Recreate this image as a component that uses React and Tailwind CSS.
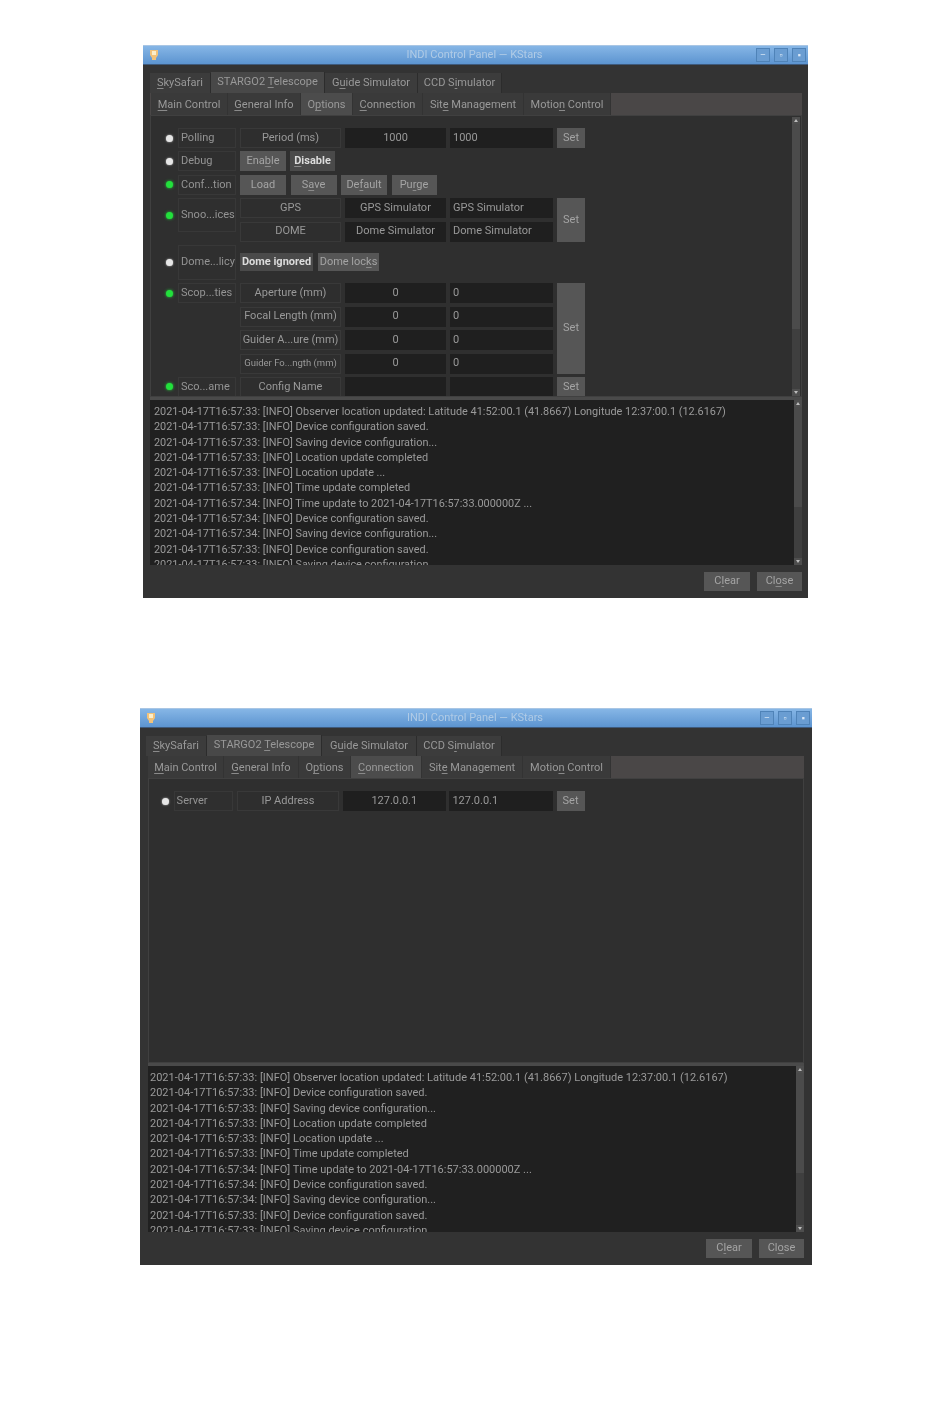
const LOG_LINES = [
  '2021-04-17T16:57:33: [INFO] Observer location updated: Latitude 41:52:00.1 (41.8667) Longitude 12:37:00.1 (12.6167)',
  '2021-04-17T16:57:33: [INFO] Device configuration saved.',
  '2021-04-17T16:57:33: [INFO] Saving device configuration...',
  '2021-04-17T16:57:33: [INFO] Location update completed',
  '2021-04-17T16:57:33: [INFO] Location update ...',
  '2021-04-17T16:57:33: [INFO] Time update completed',
  '2021-04-17T16:57:34: [INFO] Time update to 2021-04-17T16:57:33.000000Z ...',
  '2021-04-17T16:57:34: [INFO] Device configuration saved.',
  '2021-04-17T16:57:34: [INFO] Saving device configuration...',
  '2021-04-17T16:57:33: [INFO] Device configuration saved.',
  '2021-04-17T16:57:33: [INFO] Saving device configuration...',
];

const OUTER_TABS = [
  { pre: '', key: 'S', post: 'kySafari' },
  { pre: 'STARGO2 ', key: 'T', post: 'elescope', active: true },
  { pre: 'G', key: 'u', post: 'ide Simulator' },
  { pre: 'CCD S', key: 'i', post: 'mulator' },
];

const SUB_TABS = [
  { id: 'main', pre: '', key: 'M', post: 'ain Control' },
  { id: 'general', pre: '', key: 'G', post: 'eneral Info' },
  { id: 'options', pre: 'O', key: 'p', post: 'tions' },
  { id: 'connection', pre: '', key: 'C', post: 'onnection' },
  { id: 'site', pre: 'Sit', key: 'e', post: ' Management' },
  { id: 'motion', pre: 'Motio', key: 'n', post: ' Control' },
];

function Mnemonic({ pre, k, post }) {
  return (
    <span className="whitespace-nowrap">
      {pre}
      <u className="underline-offset-2 decoration-[#8a8a8a]">{k}</u>
      {post}
    </span>
  );
}

function Light({ on, className = '' }) {
  return (
    <div className={`flex h-5 items-center justify-center ${className}`}>
      <div
        className={`h-[7px] w-[7px] rounded-full ${
          on ? 'bg-[#22e03c] shadow-[0_0_3px_#22d63a]' : 'bg-[#e6e6e6] shadow-[0_0_2px_#cccccc]'
        }`}
      />
    </div>
  );
}

function Label({ children, className = 'h-5' }) {
  return (
    <div className={`flex items-center border border-[#383838] pl-[2px] text-[11px] text-[#949494] whitespace-nowrap ${className}`}>
      {children}
    </div>
  );
}

function Name({ children, small }) {
  return (
    <div className={`flex h-5 items-center justify-center border border-[#393939] bg-[#2e2e2e] text-[#999999] whitespace-nowrap ${small ? 'text-[9.5px]' : 'text-[11px]'}`}>
      {children}
    </div>
  );
}

function Field({ children, center }) {
  return (
    <div className={`flex h-5 items-center bg-[#1f1f1f] text-[11px] text-[#999999] whitespace-nowrap ${center ? 'justify-center' : 'pl-[3px]'}`}>
      {children}
    </div>
  );
}

function Btn({ children, className = 'h-5', bold }) {
  return (
    <div
      className={`flex items-center justify-center text-[11px] whitespace-nowrap ${
        bold ? 'bg-[#4a4a4a] font-bold text-[#dcdcdc]' : 'bg-[#565656] text-[#a4a4a4]'
      } ${className}`}
    >
      {children}
    </div>
  );
}

function ScrollBar({ thumbClass }) {
  return (
    <div className="flex w-[8px] flex-col bg-[#3f3f3f]">
      <div className="flex h-[7px] items-center justify-center bg-[#4e4e4e]">
        <div className="h-0 w-0 border-x-[2px] border-b-[3px] border-x-transparent border-b-[#bdbdbd]" />
      </div>
      <div className={`bg-[#4b4b4b] ${thumbClass}`} />
      <div className="flex-1" />
      <div className="flex h-[7px] items-center justify-center bg-[#4e4e4e]">
        <div className="h-0 w-0 border-x-[2px] border-t-[3px] border-x-transparent border-t-[#bdbdbd]" />
      </div>
    </div>
  );
}

function TitleBar() {
  return (
    <div className="flex h-5 items-center border-t border-[#a9c6e4] border-b border-b-[#3e5a7c] bg-gradient-to-b from-[#86b6e6] to-[#5c94d0] pl-[6px] pr-[2px]">
      <div className="w-[44px]">
        <svg width="10" height="12" viewBox="0 0 10 12">
          <path d="M1 1h8v5l-2 3v2H3V9L1 6z" fill="#f2c27a" />
          <path d="M3 2h4v4H3z" fill="#fbeecb" />
        </svg>
      </div>
      <div className="flex-1 text-center text-[11px] text-[#b0cbe6]">INDI Control Panel — KStars</div>
      <div className="flex w-[50px] gap-[4px]">
        {['–', '▫', '▪'].map((g) => (
          <div
            key={g}
            className="flex h-[14px] w-[14px] items-center justify-center border border-[#4f83b8] bg-[#6a9dd2] text-[9px] leading-none text-[#dce9f6]"
          >
            {g}
          </div>
        ))}
      </div>
    </div>
  );
}

function OuterTabs({ widths, className }) {
  return (
    <div className={`flex h-[21px] ${className}`}>
      {OUTER_TABS.map((t, i) => (
        <div
          key={t.post}
          className={`flex items-center justify-center border-r border-[#2c2c2c] text-[11px] text-[#999999] ${
            t.active ? 'bg-[#484848]' : 'mt-[1px] bg-[#3c3c3c]'
          } ${widths[i]}`}
        >
          <Mnemonic pre={t.pre} k={t.key} post={t.post} />
        </div>
      ))}
    </div>
  );
}

function SubTabs({ widths, active, className }) {
  return (
    <div className={`flex h-[22px] items-stretch bg-[#4a4747] ${className}`}>
      {SUB_TABS.map((t, i) => (
        <div
          key={t.id}
          className={`flex items-center justify-center border-r border-[#333333] pt-[2px] text-[11px] text-[#999999] ${
            t.id === active ? 'bg-[#4c4c4c]' : 'bg-[#3a3a3a]'
          } ${widths[i]}`}
        >
          <Mnemonic pre={t.pre} k={t.key} post={t.post} />
        </div>
      ))}
    </div>
  );
}

function LogPanel({ height, textClass }) {
  return (
    <div className={`flex bg-[#202020] ${height}`}>
      <div className={`flex-1 overflow-hidden pt-[4px] text-[#9a9a9a] ${textClass}`}>
        {LOG_LINES.map((line, i) => (
          <div key={i} className="h-[15.3px] whitespace-nowrap leading-[15.3px]">
            {line}
          </div>
        ))}
      </div>
      <ScrollBar thumbClass="h-[100px]" />
    </div>
  );
}

function Footer({ className }) {
  return (
    <div className={`flex h-[33px] items-center justify-end gap-[7px] bg-[#333333] ${className}`}>
      <Btn className="h-[19px] w-[46px]">
        <Mnemonic pre="C" k="l" post="ear" />
      </Btn>
      <Btn className="h-[19px] w-[45px]">
        <Mnemonic pre="Cl" k="o" post="se" />
      </Btn>
    </div>
  );
}

function OptionsPanel() {
  return (
    <div className="flex h-[282px] border border-[#404040] bg-[#2f2f2f] pr-[1px] pt-[1px]">
      <div className="flex-1 overflow-hidden pl-[14px] pt-[11px]">
        <div className="grid grid-cols-[9px_58px_101px_101px_103px_28px] grid-rows-[20px_20px_20px_20px_20px_35px_20px_20px_20px_20px_20px] gap-x-[4px] gap-y-[3.4px]">
          <Light />
          <Label>Polling</Label>
          <Name>Period (ms)</Name>
          <Field center>1000</Field>
          <Field>1000</Field>
          <Btn>Set</Btn>

          <Light />
          <Label>Debug</Label>
          <div className="col-span-4 flex gap-[4px]">
            <Btn className="h-5 w-[46px]">
              <Mnemonic pre="Ena" k="b" post="le" />
            </Btn>
            <Btn bold className="h-5 w-[45px]">
              <Mnemonic pre="" k="D" post="isable" />
            </Btn>
          </div>

          <Light on />
          <Label>Conf...tion</Label>
          <div className="col-span-4 flex gap-[4.5px]">
            <Btn className="h-5 w-[46px]">Load</Btn>
            <Btn className="h-5 w-[46px]">
              <Mnemonic pre="S" k="a" post="ve" />
            </Btn>
            <Btn className="h-5 w-[46px]">
              <Mnemonic pre="De" k="f" post="ault" />
            </Btn>
            <Btn className="h-5 w-[45px]">
              <Mnemonic pre="Pu" k="r" post="ge" />
            </Btn>
          </div>

          <div className="row-span-2 flex h-[34px] items-center justify-center">
            <Light on />
          </div>
          <div className="row-span-2">
            <Label className="h-[34px]">Snoo...ices</Label>
          </div>
          <Name>GPS</Name>
          <Field center>GPS Simulator</Field>
          <Field>GPS Simulator</Field>
          <Btn className="row-span-2 h-full">Set</Btn>
          <Name>DOME</Name>
          <Field center>Dome Simulator</Field>
          <Field>Dome Simulator</Field>

          <div className="flex items-center justify-center">
            <Light />
          </div>
          <Label className="h-[35px]">Dome...licy</Label>
          <div className="col-span-4 flex items-center gap-[5px]">
            <Btn bold className="h-[18px] w-[73px]">Dome ignored</Btn>
            <Btn className="h-[18px] w-[61px]">
              <Mnemonic pre="Dome loc" k="k" post="s" />
            </Btn>
          </div>

          <Light on />
          <Label>Scop...ties</Label>
          <Name>Aperture (mm)</Name>
          <Field center>0</Field>
          <Field>0</Field>
          <Btn className="row-span-4 h-full">Set</Btn>

          <div className="col-span-2" />
          <Name>Focal Length (mm)</Name>
          <Field center>0</Field>
          <Field>0</Field>

          <div className="col-span-2" />
          <Name>Guider A...ure (mm)</Name>
          <Field center>0</Field>
          <Field>0</Field>

          <div className="col-span-2" />
          <Name small>Guider Fo...ngth (mm)</Name>
          <Field center>0</Field>
          <Field>0</Field>

          <Light on />
          <Label>Sco...ame</Label>
          <Name>Config Name</Name>
          <Field />
          <Field />
          <Btn>Set</Btn>
        </div>
      </div>
      <ScrollBar thumbClass="h-[205px]" />
    </div>
  );
}

function ConnectionPanel() {
  return (
    <div className="h-[285px] border border-[#404040] bg-[#2f2f2f] pl-[12px] pt-[12px]">
      <div className="grid grid-cols-[9px_59.5px_102.5px_103px_103.6px_28px] gap-x-[3.6px]">
        <Light />
        <Label>Server</Label>
        <Name>IP Address</Name>
        <Field center>127.0.0.1</Field>
        <Field>127.0.0.1</Field>
        <Btn>Set</Btn>
      </div>
    </div>
  );
}

function Splitter() {
  return <div className="h-[3px] bg-[#4a4a4a]" />;
}

export default function App() {
  return (
    <div className="min-h-[1419px] bg-white pt-[45px] font-['Roboto',sans-serif] blur-[0.5px]">
      {/* Options tab */}
      <div className="ml-[143px] h-[553px] w-[665px] bg-[#333333]">
        <TitleBar />
        <div className="h-[7px]" />
        <OuterTabs
          className="ml-[7px]"
          widths={['w-[61px]', 'w-[114px]', 'w-[93px]', 'w-[84px]']}
        />
        <SubTabs
          active="options"
          className="ml-[7px] mr-[6px] pl-[1px]"
          widths={['w-[77px]', 'w-[73px]', 'w-[52px]', 'w-[70px]', 'w-[101px]', 'w-[87px]']}
        />
        <div className="ml-[7px] mr-[6px]">
          <OptionsPanel />
          <Splitter />
          <LogPanel height="h-[165px] pl-[4px]" textClass="text-[10.9px]" />
        </div>
        <Footer className="mr-[6px]" />
      </div>

      <div className="h-[110px]" />

      {/* Connection tab */}
      <div className="ml-[140px] h-[557px] w-[672px] bg-[#333333]">
        <TitleBar />
        <div className="h-[7px]" />
        <OuterTabs
          className="ml-[6px]"
          widths={['w-[61px]', 'w-[115px]', 'w-[95px]', 'w-[85px]']}
        />
        <SubTabs
          active="connection"
          className="ml-[8px] mr-[8px]"
          widths={['w-[76px]', 'w-[75px]', 'w-[52px]', 'w-[71px]', 'w-[101px]', 'w-[88px]']}
        />
        <div className="ml-[8px] mr-[8px]">
          <ConnectionPanel />
          <Splitter />
          <LogPanel height="h-[166px] pl-[2px]" textClass="text-[11px]" />
        </div>
        <Footer className="mr-[8px]" />
      </div>
    </div>
  );
}
